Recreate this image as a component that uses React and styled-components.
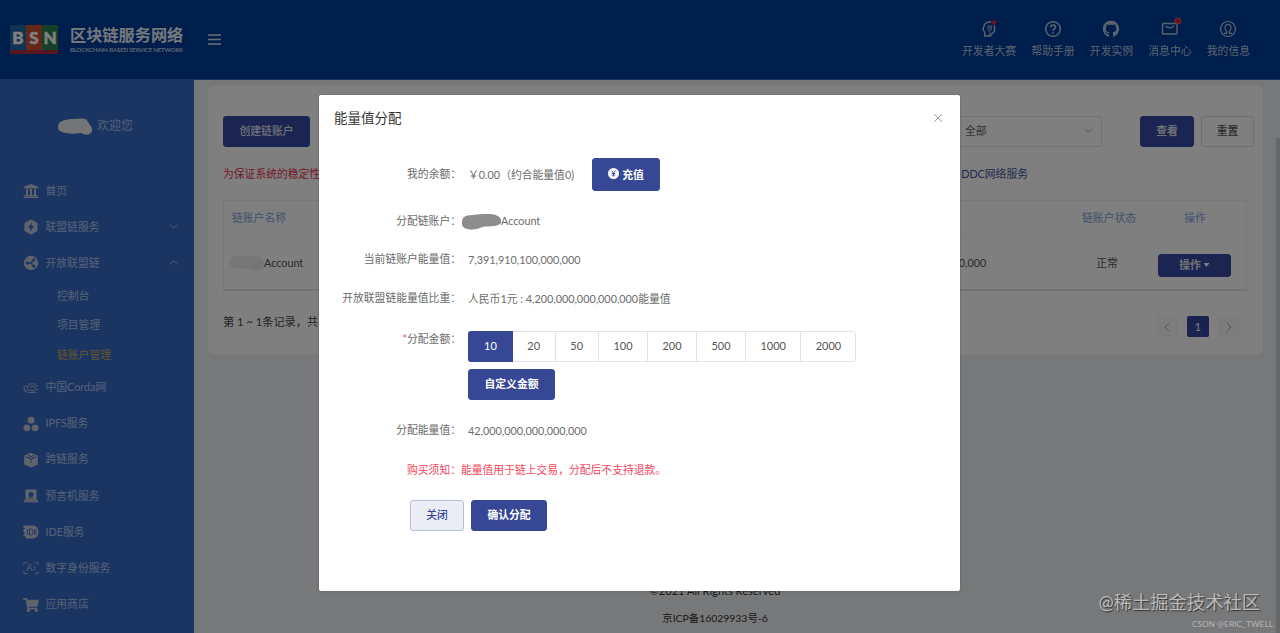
import React from 'react';
import styled, { createGlobalStyle } from 'styled-components';
import { FaUniversity, FaShoppingCart, FaGithub } from 'react-icons/fa';

const Global = createGlobalStyle`
  * { box-sizing: border-box; }
  html, body { margin: 0; height: 633px; overflow: hidden; }
  body { font: 10.8px/16px Lato, "Noto Sans CJK SC", sans-serif; color: #4a4a4a; background: #eef1f3; }
  svg { display: block; flex: none; }
`;

const Page = styled.div`position: relative; height: 633px; width: 1280px; overflow: hidden; display: flex; flex-direction: column;`;
const Header = styled.header`
  height: 80px; flex: none; display: flex; align-items: center; padding: 0 30px 0 10px;
  background: #003d98; border-bottom: 1px solid #2f66b4; color: #e6ecf5;
`;
const Logo = styled.div`display: flex; width: 48px; height: 29px; border-bottom: 4px solid #b02c44;`;
const Tile = styled.span`
  width: 16px; height: 25px; background: ${p => p.$bg}; color: #fff; text-align: center;
  font: 900 17px/25px Lato, sans-serif; -webkit-text-stroke: 0.5px #fff;
`;
const Brand = styled.div`margin: 0 0 0 12px; width: 138px; color: #e8eef8;`;
const BrandName = styled.div`font-size: 16.2px; line-height: 20px; font-weight: 700; white-space: nowrap;`;
const BrandSub = styled.div`font: 700 6.1px/10px Lato, sans-serif; white-space: nowrap; letter-spacing: -0.21px; color: #b9c8e2;`;
const HeaderNav = styled.nav`margin-left: auto; display: flex; gap: 15.3px;`;
const NavItem = styled.div`display: flex; flex-direction: column; align-items: center; gap: 4px; white-space: nowrap; color: #b4c5de;
  svg { width: 18px; height: 18px; margin: -1px 0 1px; }
`;

const Body = styled.div`flex: 1; display: flex; min-height: 0;`;
const Sidebar = styled.aside`width: 194px; flex: none; background: #366bc6; color: #a9c4ea;`;
const Welcome = styled.div`height: 92.5px; display: flex; align-items: center; padding-left: 57px; gap: 4px; font-size: 12px; svg { margin-top: 1px; }`;
const MenuItem = styled.div`
  height: 36.2px; display: flex; align-items: center; padding: 0 16px 0 23px;
  > span { flex: 1; margin-left: 6.5px; }
  > svg:first-child { width: 16px; height: 16px; margin-top: 1px; color: #bfc6d6; }
`;
const SubItem = styled.div`height: 29.3px; line-height: 29.3px; padding-left: 57px; color: ${p => (p.$active ? '#c9a85a' : '#a9c4ea')};`;

const Main = styled.main`flex: 1; min-width: 0; display: flex; flex-direction: column; padding: 6px 17px 0 14px;`;
const Card = styled.section`height: 268px; background: #fff; border-radius: 5px; padding: 30px 9px 0 15px; flex: none;`;
const Row = styled.div`display: flex; align-items: center;`;
const Button = styled.button`
  height: ${p => p.$h || 31}px; width: ${p => p.$w}px; border: 1px solid ${p => (p.$plain ? '#dfe1e5' : '#364895')};
  border-radius: 3px; background: ${p => (p.$plain ? '#fff' : '#364895')}; color: ${p => (p.$plain ? '#555' : '#fff')};
  font: inherit; font-weight: ${p => p.$weight || 500}; padding: 0 0 2px; display: flex; align-items: center; justify-content: center;
  flex: none;
`;
const PageButton = styled(Button)`background: #384aa2; border-color: #384aa2; color: #dfe2f0;`;
const ResetButton = styled(Button)`margin-left: 7px;`;
const ChargeButton = styled(Button)`margin-left: 18px; gap: 3px; padding: 0; svg { margin-top: -3px; }`;
const Select = styled.div`
  margin-left: auto; width: 200px; height: 31px; border: 1px solid #e2e4e8; border-radius: 2px; display: flex; align-items: center;
  justify-content: space-between; padding: 0 8px 2px 62px; margin-right: 38px; color: #666;
`;
const Warning = styled(Row)`height: 54px; justify-content: space-between; padding-right: 226px; color: #e83552;`;
const Link = styled.span`color: #46549f;`;
const Table = styled.div`width: 1024px; height: 91px; border: 1px solid #eef0f2; border-bottom: 2px solid #e3e5e8; margin-top: -1px;`;
const TableRow = styled(Row)`
  height: ${p => (p.$head ? 36 : 52)}px; padding: 0 15px ${p => (p.$head ? 2 : 0)}px 8px;
  color: ${p => (p.$head ? '#7fa5d8' : '#555')}; border-bottom: ${p => (p.$head ? '1px solid #f5f6f8' : '0')};
`;
const Name = styled.div`width: 700px; display: flex; align-items: center; svg { margin: 0 -1px 0 -3px; }`;
const Amount = styled.div`width: 56px; text-align: right;`;
const State = styled.div`width: 80px; margin-left: 81px; text-align: center;`;
const Action = styled.div`flex: 1; display: flex; justify-content: center; padding: 0 0 0 10px;
  button { gap: 2px; margin: 4px 0 0 1px; padding-bottom: 0; }
`;
const Pager = styled(Row)`height: 71px; padding-right: 14px;`;
const PageInfo = styled.span`flex: 1; font-size: 11.2px; padding-bottom: 9px;`;
const PageBox = styled.div`
  width: 22px; height: 21px; margin-left: 9px; border-radius: 2px; display: flex; align-items: center; justify-content: center;
  background: ${p => (p.$on ? '#3546a0' : '#f8f8f8')}; color: ${p => (p.$on ? '#fff' : '#aaa')}; margin-top: 0;
`;
const Footer = styled.footer`margin-top: 224px; padding-right: 41px; text-align: center; font-size: 10.4px; line-height: 26.5px; color: #333;
  div:first-child { font-size: 11.1px; }
`;

const Overlay = styled.div`position: absolute; inset: 0; background: rgba(0, 0, 0, 0.5);`;
const ScrollThumb = styled.div`position: absolute; right: 0; top: 138px; width: 4px; height: 495px; background: #666769;`;
const Modal = styled.div`
  position: absolute; left: 319px; top: 95px; width: 640.5px; height: 495.5px; background: #fff; border-radius: 2px;
  box-shadow: 0 0 3px rgba(0, 0, 0, 0.2); color: #6b6b6b;
`;
const ModalHead = styled.div`height: 45px; padding: 0 17.5px 0 15px; display: flex; align-items: center; justify-content: space-between; font-size: 13.5px; color: #333;`;
const Form = styled.div`padding-top: 18px;`;
const Field = styled.div`display: flex; align-items: ${p => (p.$top ? 'flex-start' : 'center')}; height: ${p => p.$h || 22}px; margin-bottom: ${p => p.$mb}px;`;
const Label = styled.div`width: 142px; text-align: right; margin-right: ${p => p.$gap ?? 7}px; padding-bottom: ${p => (p.$gap === 0 ? 0 : 2)}px; white-space: nowrap; i { color: #f5475c; font-style: normal; }`;
const Value = styled.div`display: flex; align-items: center; white-space: nowrap;`;
const Segments = styled.div`display: flex; height: 31px; border: 1px solid #e2e5e8; border-radius: 3px;`;
const Segment = styled.div`
  width: ${p => p.$w}px; margin: -1px 0 -1px ${p => (p.$on ? -1 : 0)}px; padding-bottom: 2px; display: flex; align-items: center; justify-content: center;
  border-left: ${p => (p.$on || p.$first ? 0 : 1)}px solid #dfe2e6; font-size: 11px;
  color: ${p => (p.$on ? '#fff' : '#555')}; background: ${p => (p.$on ? '#364895' : 'transparent')}; border-radius: ${p => (p.$on ? '3px 0 0 3px' : 0)};
`;
const Notice = styled.div`padding-left: 88px; height: 22px; line-height: 21px; color: #f5475c; margin-bottom: 19px;`;
const Actions = styled.div`display: flex; gap: 7px; padding-left: 91px;`;
const CloseButton = styled(Button)`background: #ebedf5; border-color: #b9bfda; color: #364895;`;
const Watermark = styled.div`
  position: absolute; right: 20px; bottom: 18px; font-size: 18.3px; line-height: 26px; color: #b9babb; text-shadow: 1px 1px 1px #333; white-space: nowrap;
`;
const Credit = styled.div`position: absolute; right: 7px; bottom: 3px; font-size: 8.4px; line-height: 12px; color: #b4b5b6; white-space: nowrap;`;

const Chevron = ({ dir = 'down', size = 9, color = 'currentColor' }) => {
  const d = { down: 'M1 3l4 4 4-4', up: 'M1 7l4-4 4 4', left: 'M7 1L3 5l4 4', right: 'M3 1l4 4-4 4' }[dir];
  return <svg width={size} height={size} viewBox="0 0 10 10" fill="none" stroke={color} strokeWidth="1"><path d={d} /></svg>;
};
const Icon = ({ children, line }) => (
  <svg viewBox="0 0 16 16" fill={line ? 'none' : 'currentColor'} stroke={line ? 'currentColor' : 'none'} strokeWidth="1.1">{children}</svg>
);
const cut = '#366bc6';

const BoltIcon = () => <Icon><path d="M8 1l6 3.5v7L8 15l-6-3.500v-7z" stroke="currentColor" strokeLinejoin="round" /><path d="M9.200 3L5 9h2.600L7 13l4.200-6H8.600z" fill={cut} /></Icon>;
const NodesIcon = () => (
  <Icon><circle cx="8" cy="8" r="7.200" /><g fill={cut} stroke={cut}><path d="M4 8H8l3-3.500M8 8l3 3.500" fill="none" strokeWidth="1.300" /><circle cx="4.300" cy="8" r="1" /><circle cx="11" cy="4.800" r="1" /><circle cx="11" cy="11.300" r="1" /></g></Icon>
);
const CordaIcon = () => (
  <Icon line><g opacity=".75"><path d="M4.500 4h9M4.500 12.500h9M4 5.500C2 6 1 7 1 8.800s1.200 2.800 3 2.800M7.500 6.300c-1.500-.8-3.300 0-3.300 1.900s1.800 2.700 3.300 1.900M7.500 8c1-2.500 3.500-2 4.500 0s2.500 2.500 3 1M8 10c1.500 1.500 3 1 4 0M12 6c1-.5 2.500 0 3 .8" /></g></Icon>
);
const BallsIcon = () => <Icon><circle cx="8" cy="4.200" r="3.400" /><circle cx="3.900" cy="11.800" r="3.400" /><circle cx="12.100" cy="11.800" r="3.400" /></Icon>;
const CubeIcon = () => <Icon><path d="M8 .8l6.800 3v8.700L8 15.500l-6.800-3V3.800z" /><path d="M2 4.600l6 2.500 6-2.500M8 7.100V11M4.800 3.200l6 2.500M11.200 3.200l-6 2.500" fill="none" stroke={cut} strokeWidth=".8" /></Icon>;
const LaptopIcon = () => <Icon><path d="M2.500 1.500h11V12h-11zM.8 12.200h14.400v2H.8z" /><circle cx="8" cy="6.600" r="2.500" fill={cut} /><path d="M5.500 10h5" stroke={cut} strokeWidth=".8" /></Icon>;
const IdeIcon = () => <Icon><path d="M.5 1.500h9.500c3.500 0 5.500 3 5.500 6.500s-2 6.500-5.500 6.500H3v-2H.5v-2h1V8h-1V5h1.500V4H.5z" /><path d="M4.500 5v6M6.500 5h1.500c1.500 0 2 1.300 2 3s-.5 3-2 3H6.500zM13.500 6H11.500v4h2M11.500 8h2" fill="none" stroke={cut} strokeWidth=".9" /></Icon>;
const ScanIcon = () => <Icon line><g opacity=".7"><path d="M1 5V2.500h3.500M11.500 2.500H15V5M15 11v2.500h-3.500M4.500 13.500H1V11M4 11c0-2 1-3 2.500-3S9 9 9 11M10 7h3M10 9.500h3" /><circle cx="6.500" cy="6" r="1.500" /></g></Icon>;

const ContestIcon = () => (
  <svg viewBox="0 0 18 18" fill="none" stroke="currentColor" strokeWidth="1.400"><path d="M11.500 2H8L4.500 4.200 3 9.500l1.800 3V16h5.700l1.500-2.500 2.500-2V5" /><path d="M8 5.500v4l1.800 3V16M9.800 5v4.500M11.600 5.500V9L10 11" strokeWidth=".9" /><path d="M11.500 1.500h4l-1.500 3z" fill="#e0203a" stroke="#e0203a" /></svg>
);
const HelpIcon = () => <svg viewBox="0 0 18 18" fill="none" stroke="currentColor" strokeWidth="1.500"><circle cx="9" cy="9" r="7.300" /><path d="M6.700 7.300c0-3 4.700-3 4.700 0 0 1.700-2.400 1.700-2.400 3.700M9 12.200v1.500" strokeWidth="1.600" /></svg>;
const MailBox = styled.svg`overflow: visible;`;
const MailIcon = () => (
  <MailBox viewBox="0 0 18 18" fill="none" stroke="currentColor" strokeWidth="1.400"><rect x="1.500" y="3.500" width="14.500" height="10.500" rx="1" /><path d="M4.500 6c2.500 2.500 6 2.500 8.500 0" /><circle cx="16.800" cy=".9" r="3" fill="#e8142c" stroke="#ef7080" strokeWidth=".7" /></MailBox>
);
const UserIcon = () => <svg viewBox="0 0 18 18" fill="none" stroke="currentColor" strokeWidth="1.200"><circle cx="9" cy="9" r="7.500" /><path d="M4.800 13.300h2.800v-2C6.300 10.300 6 9 6 7.500 6 5.500 7.300 4.300 9 4.300s3 1.200 3 3.200c0 1.500-.3 2.800-1.600 3.800v2h2.800" /></svg>;
const GithubIcon = styled(FaGithub)`padding: 0.6px;`;

const navItems = [
  ['开发者大赛', ContestIcon], ['帮助手册', HelpIcon], ['开发实例', GithubIcon], ['消息中心', MailIcon], ['我的信息', UserIcon],
];
const topMenu = [['首页', FaUniversity], ['联盟链服务', BoltIcon, 'down'], ['开放联盟链', NodesIcon, 'up']];
const lowerMenu = [
  ['中国Corda网', CordaIcon], ['IPFS服务', BallsIcon], ['跨链服务', CubeIcon], ['预言机服务', LaptopIcon],
  ['IDE服务', IdeIcon], ['数字身份服务', ScanIcon], ['应用商店', FaShoppingCart],
];
const amounts = [['10', 45], ['20', 41.5], ['50', 43.5], ['100', 49], ['200', 49], ['500', 49], ['1000', 55.3], ['2000', 55.2]];

const MenuEntry = ({ item: [text, Glyph, arrow] }) => (
  <MenuItem><Glyph /><span>{text}</span>{arrow && <Chevron dir={arrow} />}</MenuItem>
);

export default function App() {
  return (
    <Page>
      <Global />
      <Header>
        <Logo><Tile $bg="#1f68a5">B</Tile><Tile $bg="#c9502f">S</Tile><Tile $bg="#26804c">N</Tile></Logo>
        <Brand><BrandName>区块链服务网络</BrandName><BrandSub>BLOCKCHAIN-BASED SERVICE NETWORK</BrandSub></Brand>
        <svg width="13" height="12" viewBox="0 0 13 12" stroke="#d7e0ee" strokeWidth="1.5"><path d="M0 1h13M0 5.500h13M0 10h13" /></svg>
        <HeaderNav>{navItems.map(([text, Glyph]) => <NavItem key={text}><Glyph />{text}</NavItem>)}</HeaderNav>
      </Header>
      <Body>
        <Sidebar>
          <Welcome>
            <svg width="36" height="18" viewBox="0 0 36 18"><path d="M1 9C1 3 8 1 17 1c8-1 13-1 14 3 2 3 5 6 4 9-2 5-7 4-11 2-6 1-11 1-15 0C3 14 1 12 1 9z" fill="#e9eaec" /></svg>
            欢迎您
          </Welcome>
          {topMenu.map(item => <MenuEntry key={item[0]} item={item} />)}
          <SubItem>控制台</SubItem><SubItem>项目管理</SubItem><SubItem $active>链账户管理</SubItem>
          {lowerMenu.map(item => <MenuEntry key={item[0]} item={item} />)}
        </Sidebar>
        <Main>
          <Card>
            <Row>
              <PageButton $w={87}>创建链账户</PageButton>
              <Select>全部<Chevron color="#aaa" /></Select>
              <PageButton $w={54} $weight={700}>查看</PageButton>
              <ResetButton $w={53} $plain>重置</ResetButton>
            </Row>
            <Warning><span>为保证系统的稳定性</span><Link>DDC网络服务</Link></Warning>
            <Table>
              <TableRow $head><Name>链账户名称</Name><Amount /><State>链账户状态</State><Action>操作</Action></TableRow>
              <TableRow>
                <Name>
                  <svg width="36" height="18" viewBox="0 0 36 18"><path d="M1 8c0-6 5-6 11-6 6-1 10-1 14 0 6 0 10 5 9 10-1 6-9 5-13 3-6-1-10 0-15-1-4 0-6-2-6-6z" fill="#ebecec" /></svg>
                  Account
                </Name>
                <Amount>00,000</Amount><State>正常</State>
                <Action><PageButton $w={73} $h={23} $weight={700}>操作<svg width="7" height="4" viewBox="0 0 6 4" fill="#fff"><path d="M0 0h6L3 4z" /></svg></PageButton></Action>
              </TableRow>
            </Table>
            <Pager>
              <PageInfo>第 1 ~ 1条记录，共</PageInfo>
              <PageBox><Chevron dir="left" size={10} /></PageBox><PageBox $on>1</PageBox><PageBox><Chevron dir="right" size={10} /></PageBox>
            </Pager>
          </Card>
          <Footer><div>©2021 All Rights Reserved</div><div>京ICP备16029933号-6</div></Footer>
        </Main>
      </Body>
      <Overlay />
      <ScrollThumb />
      <Modal>
        <ModalHead>能量值分配<svg width="8" height="8" viewBox="0 0 8 8" stroke="#999" strokeWidth=".9"><path d="M0 0l8 8M8 0L0 8" /></svg></ModalHead>
        <Form>
          <Field $h={33} $mb={19}>
            <Label>我的余额：</Label>
            <Value>￥0.00（约合能量值0)</Value>
            <ChargeButton $w={68} $h={33} $weight={700}><svg width="11" height="11" viewBox="0 0 11 11"><circle cx="5.500" cy="5.500" r="5.500" fill="#fff" /><path d="M3.500 2.500l2 2.500 2-2.500M5.500 5v3.500M3.700 5.500h3.600M3.700 7h3.600" fill="none" stroke="#364895" strokeWidth=".9" /></svg>充值</ChargeButton>
          </Field>
          <Field $mb={17}>
            <Label $gap={0}>分配链账户：</Label>
            <svg width="40" height="17" viewBox="0 0 41 17"><path d="M1 10c0-6 3-8 9-8C20 1 31 0 36 2c4 1 6 5 5 8-3 4-11 3-18 4-5 2-12 4-17 2-4-1-5-3-5-6z" fill="#8d8d8d" /></svg>Account
          </Field>
          <Field $mb={17}><Label>当前链账户能量值：</Label><Value>7,391,910,100,000,000</Value></Field>
          <Field $mb={21}><Label>开放联盟链能量值比重：</Label><Value>人民币1元 : 4,200,000,000,000,000能量值</Value></Field>
          <Field $top $h={31} $mb={7}>
            <Label><i>*</i>分配金额：</Label>
            <Segments>{amounts.map(([text, w], i) => <Segment key={text} $w={w} $on={i === 0} $first={i === 1}>{text}</Segment>)}</Segments>
          </Field>
          <Field $h={31} $mb={20}><Label /><Button $w={87} $weight={700}>自定义金额</Button></Field>
          <Field $mb={17}><Label>分配能量值：</Label><Value>42,000,000,000,000,000</Value></Field>
          <Notice>购买须知：能量值用于链上交易，分配后不支持退款。</Notice>
          <Actions><CloseButton $w={54}>关闭</CloseButton><Button $w={76} $weight={700}>确认分配</Button></Actions>
        </Form>
      </Modal>
      <Watermark>@稀土掘金技术社区</Watermark>
      <Credit>CSDN @ERIC_TWELL</Credit>
    </Page>
  );
}
